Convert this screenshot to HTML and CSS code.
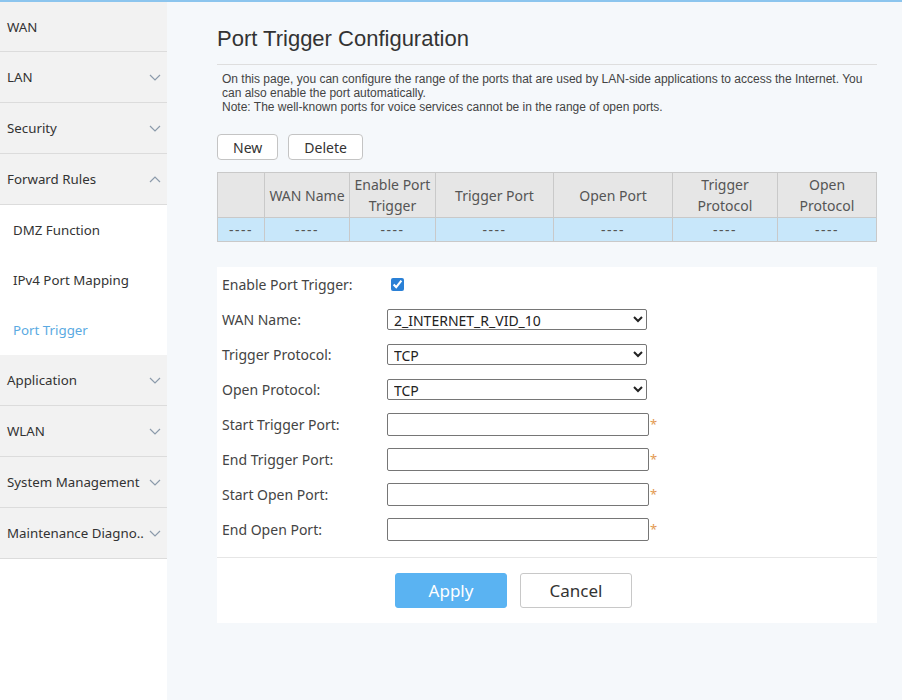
FILE: index.html
```html
<!DOCTYPE html>
<html lang="en">
<head>
    <meta charset="UTF-8">
    <meta name="viewport" content="width=device-width, initial-scale=1.0">
    <title>Port Trigger Configuration</title>
    <link rel="stylesheet" href="styles.css">
</head>
<body>
    <div class="top-line"></div>
    <div class="page">
        <div class="sidebar">
            <div class="menu-item first"><span>WAN</span></div>
            <div class="menu-item">
                <span>LAN</span>
                <svg class="arrow" viewBox="0 0 12 7"><polyline points="1,1 6,6 11,1"/></svg>
            </div>
            <div class="menu-item">
                <span>Security</span>
                <svg class="arrow" viewBox="0 0 12 7"><polyline points="1,1 6,6 11,1"/></svg>
            </div>
            <div class="menu-item">
                <span>Forward Rules</span>
                <svg class="arrow" viewBox="0 0 12 7"><polyline points="1,6 6,1 11,6"/></svg>
            </div>
            <div class="submenu">
                <div class="sub-item">DMZ Function</div>
                <div class="sub-item">IPv4 Port Mapping</div>
                <div class="sub-item active">Port Trigger</div>
            </div>
            <div class="menu-item">
                <span>Application</span>
                <svg class="arrow" viewBox="0 0 12 7"><polyline points="1,1 6,6 11,1"/></svg>
            </div>
            <div class="menu-item">
                <span>WLAN</span>
                <svg class="arrow" viewBox="0 0 12 7"><polyline points="1,1 6,6 11,1"/></svg>
            </div>
            <div class="menu-item">
                <span>System Management</span>
                <svg class="arrow" viewBox="0 0 12 7"><polyline points="1,1 6,6 11,1"/></svg>
            </div>
            <div class="menu-item">
                <span>Maintenance Diagno..</span>
                <svg class="arrow" viewBox="0 0 12 7"><polyline points="1,1 6,6 11,1"/></svg>
            </div>
        </div>

        <div class="content">
            <h1>Port Trigger Configuration</h1>
            <div class="description">
                On this page, you can configure the range of the ports that are used by LAN-side applications to access the Internet. You can also enable the port automatically.<br>
                Note: The well-known ports for voice services cannot be in the range of open ports.
            </div>

            <div class="toolbar">
                <button class="btn">New</button>
                <button class="btn">Delete</button>
            </div>

            <table class="rule-table">
                <colgroup>
                    <col style="width:47px">
                    <col style="width:85px">
                    <col style="width:86px">
                    <col style="width:118px">
                    <col style="width:119px">
                    <col style="width:105px">
                    <col>
                </colgroup>
                <thead>
                    <tr>
                        <th></th>
                        <th>WAN Name</th>
                        <th>Enable Port Trigger</th>
                        <th>Trigger Port</th>
                        <th>Open Port</th>
                        <th>Trigger Protocol</th>
                        <th>Open Protocol</th>
                    </tr>
                </thead>
                <tbody>
                    <tr>
                        <td>----</td>
                        <td>----</td>
                        <td>----</td>
                        <td>----</td>
                        <td>----</td>
                        <td>----</td>
                        <td>----</td>
                    </tr>
                </tbody>
            </table>

            <div class="form-panel">
                <div class="form-row">
                    <label>Enable Port Trigger:</label>
                    <input type="checkbox" checked>
                </div>
                <div class="form-row">
                    <label>WAN Name:</label>
                    <select><option>2_INTERNET_R_VID_10</option></select>
                </div>
                <div class="form-row">
                    <label>Trigger Protocol:</label>
                    <select><option>TCP</option></select>
                </div>
                <div class="form-row">
                    <label>Open Protocol:</label>
                    <select><option>TCP</option></select>
                </div>
                <div class="form-row">
                    <label>Start Trigger Port:</label>
                    <input type="text" class="text-input"><span class="required">*</span>
                </div>
                <div class="form-row">
                    <label>End Trigger Port:</label>
                    <input type="text" class="text-input"><span class="required">*</span>
                </div>
                <div class="form-row">
                    <label>Start Open Port:</label>
                    <input type="text" class="text-input"><span class="required">*</span>
                </div>
                <div class="form-row">
                    <label>End Open Port:</label>
                    <input type="text" class="text-input"><span class="required">*</span>
                </div>

                <div class="form-actions">
                    <button class="btn-large btn-apply">Apply</button>
                    <button class="btn-large btn-cancel">Cancel</button>
                </div>
            </div>
        </div>
    </div>
</body>
</html>
```

FILE: styles.css
```css
body {
    margin: 0;
    font-family: "Noto Sans", "Open Sans", sans-serif;
    color: #333;
    background-color: #f5f8fb;
}
.top-line {
    height: 2px;
    background-color: #8cc5ee;
}
.page {
    display: flex;
    min-height: 698px;
}

/* left menu */
.sidebar {
    width: 167px;
    flex-shrink: 0;
    background-color: #fff;
}
.menu-item {
    height: 50px;
    display: flex;
    align-items: center;
    justify-content: space-between;
    padding: 0 6px 0 7px;
    background-color: #f2f2f2;
    border-bottom: 1px solid #dcdcdc;
    font-size: 13.3px;
    color: #333;
    white-space: nowrap;
}
.menu-item.first {
    height: 49px;
}
.arrow {
    width: 12px;
    height: 7px;
    fill: none;
    stroke: #8c9bab;
    stroke-width: 1.2;
}
.submenu {
    background-color: #fff;
}
.sub-item {
    height: 50px;
    line-height: 50px;
    padding-left: 13px;
    font-size: 13.3px;
    color: #333;
}
.sub-item.active {
    color: #5aaae2;
}

/* main area */
.content {
    flex: 1;
    padding: 0 25px 0 50px;
}
h1 {
    font-family: "Liberation Sans", Arial, sans-serif;
    font-weight: normal;
    font-size: 22px;
    line-height: 26px;
    color: #333;
    margin: 24px 0 0 0;
    padding-bottom: 12px;
    border-bottom: 1px solid #dedede;
}
.description {
    font-family: "Liberation Sans", Arial, sans-serif;
    font-size: 12px;
    line-height: 14px;
    color: #444;
    padding: 7px 5px 0 5px;
}
.toolbar {
    display: flex;
    gap: 10px;
    margin-top: 20px;
}
.btn {
    height: 26px;
    padding: 0 15px;
    font-family: "Noto Sans", sans-serif;
    font-size: 14px;
    color: #333;
    background-color: #fff;
    border: 1px solid #c4c4c4;
    border-radius: 4px;
}

.rule-table {
    width: 100%;
    table-layout: fixed;
    border-collapse: collapse;
    margin-top: 12px;
    font-size: 14px;
}
.rule-table th,
.rule-table td {
    border: 1px solid #c9c9c9;
    text-align: center;
    color: #555;
    font-weight: normal;
}
.rule-table th {
    height: 44px;
    line-height: 21px;
    padding: 0 2px;
    background-color: #e6e6e6;
}
.rule-table td {
    height: 23px;
    line-height: 20px;
    padding: 0;
    letter-spacing: 1.5px;
    background-color: #c8e7fa;
}

.form-panel {
    background-color: #fff;
    margin-top: 25px;
    padding-bottom: 15px;
}
.form-row {
    height: 35px;
    display: flex;
    align-items: center;
    font-size: 14px;
}
.form-row label {
    width: 165px;
    padding-left: 5px;
    color: #444;
}
.form-row input[type="checkbox"] {
    width: 13px;
    height: 13px;
    margin: 0 0 0 4px;
    accent-color: #2a80d6;
}
.form-row select {
    width: 260px;
    height: 21px;
    font-family: "Noto Sans", sans-serif;
    font-size: 14px;
    color: #222;
    border: 1px solid #767676;
    border-radius: 2px;
    background-color: #fff;
    padding: 0 2px;
}
.text-input {
    width: 262px;
    height: 23px;
    box-sizing: border-box;
    border: 1px solid #767676;
    border-radius: 2px;
    padding: 0 4px;
    font-size: 14px;
}
.required {
    color: #e39a52;
    font-size: 13px;
    margin-left: 1px;
    align-self: flex-start;
    margin-top: 8px;
}
.form-actions {
    display: flex;
    gap: 13px;
    margin-top: 10px;
    padding: 15px 0 0 178px;
    border-top: 1px solid #e6e6e6;
}
.btn-large {
    width: 112px;
    height: 35px;
    font-family: "Noto Sans", sans-serif;
    font-size: 17px;
    border-radius: 3px;
}
.btn-apply {
    background-color: #5ab3f2;
    border: 1px solid #5ab3f2;
    color: #fff;
}
.btn-cancel {
    background-color: #fff;
    border: 1px solid #c8c8c8;
    color: #333;
}
```
